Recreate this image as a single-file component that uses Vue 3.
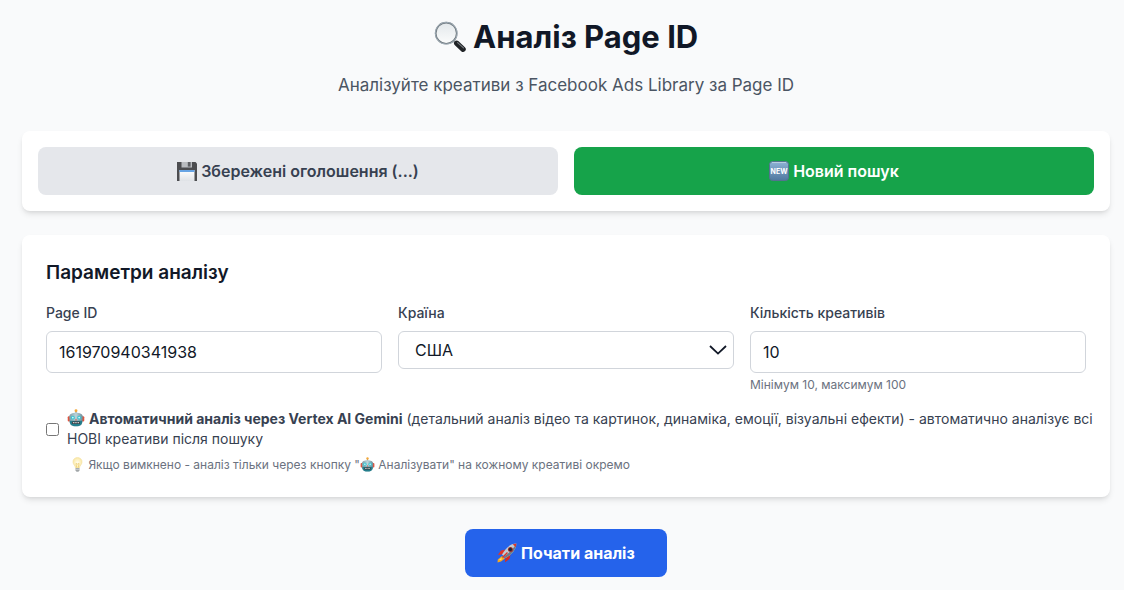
<script setup>
import { ref } from 'vue'

const pageId = ref('161970940341938')
const country = ref('US')
const count = ref('10')
const auto = ref(false)
</script>

<template>
  <svg class="defs" aria-hidden="true">
    <defs>
      <linearGradient id="lens" x1="0" y1="0" x2="0" y2="1">
        <stop offset="0" stop-color="#e3e8eb" />
        <stop offset="1" stop-color="#fbfcfc" />
      </linearGradient>
      <linearGradient id="badge" x1="0" y1="0" x2="0" y2="1">
        <stop offset="0" stop-color="#8eb3d6" />
        <stop offset="1" stop-color="#4f789f" />
      </linearGradient>
      <linearGradient id="metal" x1="0" y1="0" x2="1" y2="0">
        <stop offset="0" stop-color="#7f9ca6" />
        <stop offset="0.5" stop-color="#b9d3da" />
        <stop offset="1" stop-color="#6d8a95" />
      </linearGradient>
      <linearGradient id="paper" x1="0" y1="0" x2="0" y2="1">
        <stop offset="0" stop-color="#ffffff" />
        <stop offset="1" stop-color="#dfe2e6" />
      </linearGradient>
      <radialGradient id="glow">
        <stop offset="0" stop-color="#fffdf0" />
        <stop offset="1" stop-color="#fbe9a6" />
      </radialGradient>
      <symbol id="robot" viewBox="0 0 20 20">
        <rect x="9.3" y="2" width="1.4" height="4" fill="#8a9aa2" />
        <circle cx="10" cy="2" r="1.6" fill="#f3a93c" />
        <rect x="0.8" y="8" width="3" height="6" rx="1.2" fill="#e0533d" />
        <rect x="16.2" y="8" width="3" height="6" rx="1.2" fill="#e0533d" />
        <path d="M2.4 9C2.4 5.6 6 4.2 10 4.2S17.6 5.6 17.6 9L17 15C16.6 18 14 19.2 10 19.2S3.4 18 3 15Z" fill="url(#metal)" />
        <path d="M3 13H17L16.7 15.5C16 18.3 13.5 19.2 10 19.2S4 18.3 3.3 15.5Z" fill="#247e8c" />
        <circle cx="6.5" cy="9.6" r="2.2" fill="#3bc5d2" />
        <circle cx="13.5" cy="9.6" r="2.2" fill="#3bc5d2" />
        <circle cx="6.5" cy="9.6" r="0.9" fill="#e8ffff" />
        <circle cx="13.5" cy="9.6" r="0.9" fill="#e8ffff" />
        <path d="M10 10.5L11 12.7H9Z" fill="#d8503b" />
        <rect x="5.5" y="14" width="9" height="2.5" rx="1" fill="#382f35" />
        <path d="M6.5 15.2H13.5" stroke="#e9efef" stroke-width="1.1" stroke-dasharray="1.4 0.5" />
      </symbol>
    </defs>
  </svg>

  <main class="page">
    <header class="header">
      <h1>
        <svg class="emoji e30" viewBox="0 0 38 38" aria-hidden="true">
          <path d="M23.5 23.5L27 27" stroke="#888e91" stroke-width="3" />
          <path d="M27 26.5L34.5 33.5" stroke="#202326" stroke-width="6.4" stroke-linecap="round" />
          <path d="M28 25.6L35 32" stroke="#777c80" stroke-width="1.3" stroke-linecap="round" />
          <circle cx="14.5" cy="14.5" r="12.5" fill="url(#lens)" stroke="#6f787e" stroke-width="2" />
          <circle cx="14.5" cy="14.5" r="13" fill="none" stroke="#b5c4cf" stroke-width="0.8" />
        </svg>
        Аналіз Page ID
      </h1>
      <p>Аналізуйте креативи з Facebook Ads Library за Page ID</p>
    </header>

    <nav class="card tabs">
      <button type="button" class="btn saved">
        <svg class="emoji e16" viewBox="0 0 20 20" aria-hidden="true">
          <path d="M0 1H18.5L20 2.5V20H0Z" fill="#4c4d50" />
          <path d="M4.5 1H15V6.5H4.5Z" fill="#b9bcc0" />
          <path d="M10.8 1H13.6V5.6H10.8Z" fill="#5e6064" />
          <path d="M2.5 9H17.5V20H2.5Z" fill="url(#paper)" />
          <path d="M2.5 9H17.5V11H2.5Z" fill="#67a4e4" />
        </svg>
        Збережені оголошення (...)
      </button>
      <button type="button" class="btn fresh">
        <svg class="emoji e16" viewBox="0 0 20 20" aria-hidden="true">
          <rect x="0.5" y="0.5" width="19" height="19" rx="3" fill="url(#badge)" stroke="#54738f" />
          <path d="M3 1.5H17" stroke="#b7cee1" />
          <text x="10" y="12.6" text-anchor="middle" class="badge-text">NEW</text>
        </svg>
        Новий пошук
      </button>
    </nav>

    <form id="analysis" class="card params" @submit.prevent>
      <h2>Параметри аналізу</h2>
      <div class="fields">
        <div class="field">
          <label for="page-id">Page ID</label>
          <input id="page-id" v-model="pageId" type="text" />
        </div>
        <div class="field">
          <label for="country">Країна</label>
          <div class="select">
            <select id="country" v-model="country">
              <option value="US">США</option>
            </select>
            <svg viewBox="0 0 18 10" aria-hidden="true">
              <path d="M1 1L9 8.6L17 1" fill="none" stroke="#111827" stroke-width="1.8" />
            </svg>
          </div>
        </div>
        <div class="field">
          <label for="count">Кількість креативів</label>
          <input id="count" v-model="count" type="text" inputmode="numeric" />
          <p class="help">Мінімум 10, максимум 100</p>
        </div>
      </div>
      <div class="auto">
        <input id="auto" v-model="auto" type="checkbox" />
        <label for="auto">
          <svg class="emoji e14" aria-hidden="true"><use href="#robot" /></svg>
          {{ ' ' }}<strong>Автоматичний аналіз через Vertex AI Gemini</strong>
          (детальний аналіз відео та картинок, динаміка, емоції, візуальні ефекти) - автоматично аналізує всі НОВІ креативи після пошуку
        </label>
      </div>
      <p class="hint">
        <svg class="emoji e12" viewBox="0 0 20 20" aria-hidden="true">
          <path d="M10 0.8C5.8 0.8 3.6 4 4 7.2C4.4 10.2 7 11.4 7.3 14.5H12.7C13 11.4 15.6 10.2 16 7.2C16.4 4 14.2 0.8 10 0.8Z" fill="url(#glow)" stroke="#f1dfa2" stroke-width="0.8" />
          <path d="M8.8 14L8 8.5L10 9.5L12 8.5L11.2 14" fill="none" stroke="#e9c45c" stroke-width="0.8" />
          <path d="M7.4 14.5H12.6V18L11.3 19.6H8.7L7.4 18Z" fill="#a1a6a8" />
          <path d="M7.4 16.4H12.6" stroke="#d9dddd" />
        </svg>
        Якщо вимкнено - аналіз тільки через кнопку "<svg class="emoji e12" aria-hidden="true"><use href="#robot" /></svg>
        Аналізувати" на кожному креативі окремо
      </p>
    </form>

    <div class="actions">
      <button type="submit" form="analysis" class="btn start">
        <svg class="emoji e16" viewBox="0 0 20 20" aria-hidden="true">
          <path d="M5 13L0.8 16.5L0.5 19.5L4 18.6L8 15.5Z" fill="#f6a821" />
          <path d="M4.5 14.5L2 17L4.5 17Z" fill="#ffe45c" />
          <path d="M8.5 6.5L4 7.6L0.8 12L5.5 11.3Z" fill="#e33427" />
          <path d="M13.5 11.5L12.5 16L8 19.3L8.5 14.5Z" fill="#d92b22" />
          <path d="M19.4 0.6C14 0.8 9.5 3.6 5 11.4L8.6 15C16 10.8 19 6 19.4 0.6Z" fill="#c3ccd3" />
          <path d="M19.4 0.6C19 6 16 10.8 8.6 15L7 13.4C12.5 10 17 5 19.4 0.6Z" fill="#6c7c89" />
          <path d="M19.4 0.6L15.8 1.3L18.7 4.2Z" fill="#d9382a" />
          <circle cx="13.4" cy="6.4" r="2.5" fill="#a82724" />
          <circle cx="13.4" cy="6.4" r="1.6" fill="#1c2733" />
          <path d="M10.5 9.5L5.5 14.5" stroke="#d7382a" stroke-width="1.4" />
        </svg>
        Почати аналіз
      </button>
    </div>
  </main>
</template>

<style>
body {
  background: #f9fafb;
}
</style>

<style scoped>
.defs {
  position: absolute;
  width: 0;
  height: 0;
}
.page {
  padding: 19px 14px 13px 22px;
  font-family: Inter, "Liberation Sans", sans-serif;
  font-size: 16px;
  line-height: 24px;
  color: #111827;
}
.page * {
  box-sizing: border-box;
}
h1,
h2,
p {
  margin: 0;
}
.header {
  margin-bottom: 32px;
  text-align: center;
}
h1 {
  margin-bottom: 16px;
  font-size: 31px;
  line-height: 36px;
  font-weight: 700;
}
.header p {
  font-size: 17px;
  line-height: 28px;
  color: #4b5563;
}
.emoji {
  display: inline-block;
}
.e30 {
  width: 32px;
  height: 32px;
  vertical-align: -5px;
}
.e16 {
  width: 20px;
  height: 20px;
  vertical-align: -4px;
}
.e14 {
  width: 18px;
  height: 18px;
  vertical-align: -3px;
}
.e12 {
  width: 15px;
  height: 15px;
  vertical-align: -3px;
}
.badge-text {
  font-size: 7px;
  font-weight: 700;
  fill: #fff;
}
.card {
  margin-bottom: 24px;
  border-radius: 8px;
  background: #fff;
  box-shadow: 0 4px 6px -1px rgba(0, 0, 0, 0.1), 0 2px 4px -2px rgba(0, 0, 0, 0.1);
}
.tabs {
  display: flex;
  gap: 16px;
  padding: 16px;
}
.btn {
  height: 48px;
  padding: 0 32px;
  border: 0;
  border-radius: 8px;
  font: inherit;
  font-weight: 600;
  color: #fff;
  cursor: pointer;
}
.tabs .btn {
  flex: 1;
}
.saved {
  background: #e5e7eb;
  color: #374151;
}
.fresh {
  background: #16a34a;
}
.params {
  margin-bottom: 32px;
  padding: 24px;
}
h2 {
  margin-bottom: 16px;
  font-size: 19px;
  line-height: 28px;
  font-weight: 600;
}
.fields {
  display: grid;
  grid-template-columns: repeat(3, 1fr);
  gap: 16px;
  margin-bottom: 16px;
}
.field label {
  display: block;
  margin-bottom: 8px;
  font-size: 14px;
  line-height: 20px;
  font-weight: 500;
  color: #374151;
}
.field input,
select {
  display: block;
  width: 100%;
  height: 42px;
  padding: 0 12px;
  border: 1px solid #d1d5db;
  border-radius: 6px;
  background: #fff;
  font: inherit;
  color: #111827;
}
.select {
  position: relative;
}
select {
  appearance: none;
  height: 38px;
  padding: 0 16px;
}
.select svg {
  position: absolute;
  top: 14px;
  right: 7px;
  width: 18px;
  height: 10px;
  pointer-events: none;
}
.help {
  margin-top: 4px;
  font-size: 12px;
  line-height: 16px;
  color: #6b7280;
}
.auto {
  display: flex;
  align-items: center;
  gap: 8px;
  margin-right: -12px;
  font-size: 14px;
  line-height: 20px;
  color: #374151;
}
.auto input {
  flex: none;
  width: 13px;
  height: 13px;
  margin: 0;
}
.auto strong {
  font-weight: 700;
}
.hint {
  margin: 8px 0 0 24px;
  font-size: 12px;
  line-height: 16px;
  color: #6b7280;
}
.actions {
  text-align: center;
}
.start {
  background: #2563eb;
  font-weight: 700;
}
</style>
